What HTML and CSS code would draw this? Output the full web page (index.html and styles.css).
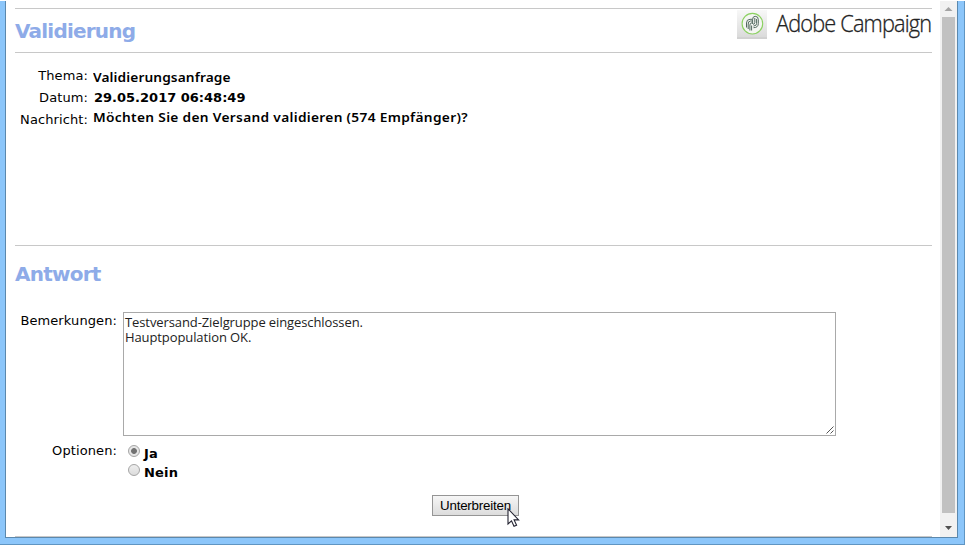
FILE: index.html
```
<!DOCTYPE html>
<html lang="de">
<head>
<meta charset="utf-8">
<title>Validierung</title>
<link rel="stylesheet" href="styles.css">
</head>
<body>
<div class="window">
  <main class="page">
    <header class="header">
      <h1>Validierung</h1>
      <div class="brand">
        <svg class="logo" width="30" height="29" viewBox="0 0 30 29">
          <defs><linearGradient id="g" x1="0" y1="0" x2="0" y2="1"><stop offset="0" stop-color="#f8f8f8"/><stop offset="1" stop-color="#d9d9d9"/></linearGradient></defs>
          <rect width="30" height="28.5" fill="url(#g)"/>
          <path d="M0 28.2H30" stroke="#bbb" stroke-width=".8"/>
          <circle cx="15.4" cy="13.7" r="10.3" fill="#f4f6f2" stroke="#8bd160" stroke-width="1.1"/>
          <g fill="none" stroke="#52695f" stroke-width="1">
            <path d="M9.5 17.5V13Q9.5 9.3 13 9.3H15.5M11.2 19V14Q11.2 11 13.5 11H15.5M12.9 20.5V15Q12.9 12.8 15 12.8"/>
            <path d="M14.6 20.5V15.5M15.6 14V9.5Q15.6 6.3 18.2 6.3Q21.3 6.3 21.3 9.5V13.5Q21.3 17.7 16.5 17.7M19.6 9V13.5Q19.6 16 16.5 16M17.8 8V12.5Q17.8 14.3 16 14.3"/>
          </g>
        </svg>
        <span>Adobe Campaign</span>
      </div>
    </header>
    <section class="message">
      <div class="label">Thema:</div><div class="value subject">Validierungsanfrage</div>
      <div class="label">Datum:</div><div class="value date">29.05.2017 06:48:49</div>
      <div class="label">Nachricht:</div><div class="value text">Möchten Sie den Versand validieren (574 Empfänger)?</div>
    </section>
    <section class="answer">
      <h2>Antwort</h2>
      <div class="row">
        <div class="label">Bemerkungen:</div>
        <div class="remarks">Testversand-Zielgruppe eingeschlossen.<br>Hauptpopulation OK.
          <svg class="grip" width="8" height="8" viewBox="0 0 8 8"><path d="M.5 7.5L7.5.5M4.5 7.5L7.5 4.5" stroke="#555" fill="none"/></svg>
        </div>
      </div>
      <div class="row options">
        <div class="label">Optionen:</div>
        <div class="choices">
          <div class="choice"><i class="radio on"></i><b>Ja</b></div>
          <div class="choice"><i class="radio"></i><b>Nein</b></div>
        </div>
      </div>
      <div class="submit">Unterbreiten
        <svg class="cursor" width="13" height="20" viewBox="0 0 13 20"><path d="M1 .8V16L4.5 12.8L7 18.3L9.6 17.2L7.1 11.9H11.6Z" fill="#fff" stroke="#222230" stroke-width="1.1"/></svg>
      </div>
    </section>
  </main>
  <div class="scrollbar">
    <svg width="17" height="14" viewBox="0 0 17 14"><path d="M4.5 10L8.5 6L12.5 10Z" fill="#a3a3a3"/></svg>
    <div class="thumb"></div>
    <svg width="17" height="24" viewBox="0 0 17 24"><path d="M5 13H12L8.5 17Z" fill="#505050"/></svg>
  </div>
</div>
</body>
</html>
```
FILE: styles.css
```
* { box-sizing: border-box; }
body { margin: 0; background: #fff; color: #000; font: 13px/16px "DejaVu Sans", Verdana, sans-serif; }
.window {
  display: flex;
  width: 965px;
  height: 544px;
  margin-top: 1px;
  padding: 0 6px 6px 5px;
  background: #8cc6fa;
  border-right: 1px solid #6095c2;
  border-bottom: 1px solid #6095c2;
  box-shadow: 0 1px 0 #e8f3fc;
}
.page {
  flex: 1;
  padding: 7px 8px 0 9px;
  background: #fff;
  border-left: 1px solid #5b88ad;
  border-bottom: 1px solid #5b88ad;
}
.header {
  display: flex;
  justify-content: space-between;
  height: 45px;
  border-top: 1px solid #c8c8c8;
  border-bottom: 1px solid #c8c8c8;
}
h1, h2 { margin: 0; color: #8eabe8; font: bold 20px/24px "DejaVu Sans", Verdana, sans-serif; }
h1 { padding-top: 10px; letter-spacing: -0.8px; }
h2 { letter-spacing: -0.75px; }
.brand { display: flex; align-items: flex-start; color: #222; }
.logo { margin-top: 1px; }
.brand span {
  width: 157px;
  margin-left: 9px;
  white-space: nowrap;
  font: 300 23.5px/29px "Open Sans", sans-serif;
  letter-spacing: -0.9px;
  -webkit-text-stroke: 0.3px #222;
  transform: scaleX(0.925);
  transform-origin: 0 0;
}
.brand { margin-right: -1px; }
.message {
  display: grid;
  grid-template-columns: 73px 1fr;
  grid-template-rows: 22px 22px 22px;
  column-gap: 5px;
  height: 193px;
  padding-top: 15px;
  border-bottom: 1px solid #c8c8c8;
}
.label { text-align: right; white-space: nowrap; letter-spacing: 0.1px; }
.value { white-space: nowrap; }
.subject, .text {
  font: 600 13px/16px "Noto Sans", sans-serif;
  letter-spacing: 0.1px;
  transform: scaleX(1.055);
  transform-origin: 0 0;
}
.subject { padding-top: 1px; }
.date { padding-left: 1px; font-weight: bold; }
.text { margin-top: -3px; letter-spacing: 0.3px; }
.answer { height: 291px; padding-top: 16px; border-bottom: 1px solid #c8c8c8; }
.row { display: grid; grid-template-columns: 102px 713px; column-gap: 6px; margin-top: 26px; }
.row .label { padding-top: 1px; }
.remarks {
  position: relative;
  height: 124px;
  padding: 2px 1px;
  border: 1px solid #a9a9a9;
  color: #222;
  font: 13px/15px "Open Sans", sans-serif;
  letter-spacing: -0.1px;
}
.grip { position: absolute; right: 1px; bottom: 1px; }
.options { margin-top: 6px; }
.choice { display: flex; height: 19px; padding-left: 5px; }
.choice b { margin: 4px 0 0 4px; letter-spacing: 0.2px; }
.radio {
  width: 12px;
  height: 12px;
  margin-top: 3px;
  border: 1px solid #a5a5a5;
  border-radius: 50%;
  background: linear-gradient(#eee, #dcdcdc);
}
.radio.on { background: radial-gradient(circle, #727272 0 2.5px, #e6e6e6 3.3px); }
.submit {
  position: relative;
  width: 87px;
  height: 21px;
  margin: 15px 0 0 417px;
  border: 1px solid #959595;
  background: linear-gradient(#f6f6f6, #dcdcdc);
  font: 13.33px/19px "Liberation Sans", Arial, sans-serif;
  letter-spacing: -0.2px;
  text-align: center;
}
.cursor { position: absolute; left: 74px; top: 12px; }
.scrollbar {
  display: flex;
  flex-direction: column;
  align-items: center;
  width: 18px;
  background: #f1f1f1;
  border-right: 1px solid #5b88ad;
  border-bottom: 1px solid #5b88ad;
}
.scrollbar svg { flex: none; }
.thumb { flex: 1; width: 13px; margin-top: 2px; background: #c1c1c1; }
```
